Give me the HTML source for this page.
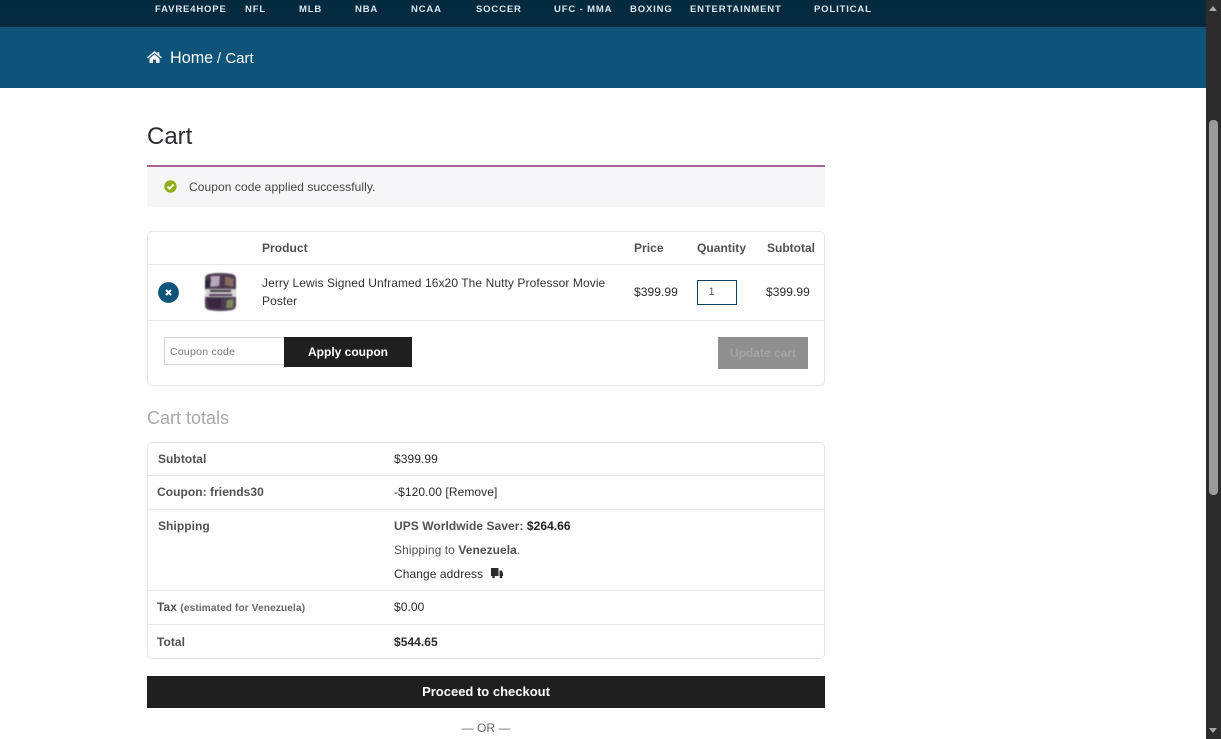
<!DOCTYPE html>
<html><head><meta charset="utf-8">
<style>
html,body{margin:0;padding:0;width:1221px;height:739px;overflow:hidden;background:#fff;font-family:"Liberation Sans",sans-serif;color:#515151}
.t{position:absolute;white-space:nowrap;font-size:12px;line-height:14px;letter-spacing:.08px}
.b{font-weight:bold;letter-spacing:.05px}
.l{position:absolute;background:#e8e8e8;height:1px}
.n{position:absolute;top:4px;white-space:nowrap;font-size:9.5px;line-height:12px;font-weight:bold;color:#dbe7ee;letter-spacing:.85px}
.d{color:#2b2b2b}
</style></head><body>
<div style="position:absolute;left:0;top:0;width:1206px;height:27px;background:linear-gradient(#052a40,#07293d)"></div>
<div style="position:absolute;left:0;top:27px;width:1206px;height:61px;background:#0e5379"></div>
<span class="n" style="left:155px">FAVRE4HOPE</span>
<span class="n" style="left:245px">NFL</span>
<span class="n" style="left:299px">MLB</span>
<span class="n" style="left:355px">NBA</span>
<span class="n" style="left:411px">NCAA</span>
<span class="n" style="left:476px">SOCCER</span>
<span class="n" style="left:554px">UFC - MMA</span>
<span class="n" style="left:630px">BOXING</span>
<span class="n" style="left:690px">ENTERTAINMENT</span>
<span class="n" style="left:814px">POLITICAL</span>

<svg style="position:absolute;left:147px;top:51px" width="15" height="12" viewBox="0 0 15 12"><path fill="#fff" d="M7.5 0 L10.5 2.6 V1 H12.3 V4.2 L15 6.5 L14 7.4 L7.5 2 L1 7.4 L0 6.5 Z M2.5 7.6 L7.5 3.4 L12.5 7.6 V12 H9 V8.6 H6 V12 H2.5 Z"/></svg>
<div class="t" style="left:170px;top:48px;font-size:16.2px;line-height:20px;color:#fff;letter-spacing:0">Home</div>
<div class="t" style="left:217px;top:50px;font-size:15px;line-height:18px;color:#fff;letter-spacing:0">/ Cart</div>

<div class="t" style="left:147px;top:122px;font-size:24px;line-height:30px;color:#2b2b33;letter-spacing:0">Cart</div>

<div style="position:absolute;left:147px;top:165px;width:678px;height:42px;background:#f6f6f8"></div>
<div style="position:absolute;left:147px;top:165px;width:678px;height:2px;background:#a46497"></div>
<svg style="position:absolute;left:164px;top:180px" width="13" height="13" viewBox="0 0 13 13"><circle cx="6.5" cy="6.5" r="6.2" fill="#8fae1b"/><path d="M3.5 6.7 L5.6 8.8 L9.6 4.5" fill="none" stroke="#fff" stroke-width="1.8"/></svg>
<div class="t" style="left:189px;top:180px;color:#444">Coupon code applied successfully.</div>

<div style="position:absolute;left:147px;top:231px;width:676px;height:153px;border:1px solid #e6e6e6;border-radius:5px"></div>
<div class="l" style="left:148px;top:264px;width:676px"></div>
<div class="l" style="left:148px;top:320px;width:676px"></div>
<div class="t b" style="left:262px;top:241px">Product</div>
<div class="t b" style="left:634px;top:241px">Price</div>
<div class="t b" style="left:697px;top:241px">Quantity</div>
<div class="t b" style="left:767px;top:241px;letter-spacing:0">Subtotal</div>

<svg style="position:absolute;left:158px;top:282px" width="21" height="21" viewBox="0 0 21 21"><circle cx="10.5" cy="10.5" r="10.4" fill="#0e5379"/><path d="M8 8 L13 13 M13 8 L8 13" stroke="#fff" stroke-width="2"/></svg>
<svg style="position:absolute;left:205px;top:273px;filter:blur(.7px)" width="31" height="38" viewBox="0 0 31 38"><path d="M4 1 Q15 -1 27 1 Q31 2 31 6 V32 Q31 36 27 37 Q15 39 4 37 Q0 36 0 32 V6 Q0 2 4 1 Z" fill="#4b3a52"/><path d="M6 3 L15 3 L14 13 L4 14 Z" fill="#b9a8bc"/><path d="M20 3 L29 6 L28 14 L20 12 Z" fill="#8a6b62"/><path d="M0 8 L6 6 L5 14 L0 15 Z" fill="#2e2233"/><rect x="0" y="16" width="31" height="8" fill="#d9d5d6"/><rect x="5" y="17" width="21" height="2" fill="#333"/><rect x="4" y="21" width="23" height="2" fill="#4a3550"/><path d="M2 25 H16 V35 H4 Z" fill="#3a2540"/><path d="M22 27 L29 26 L28 35 L21 35 Z" fill="#7d8a5a"/></svg>
<div class="t d" style="left:262px;top:276px;color:#333">Jerry Lewis Signed Unframed 16x20 The Nutty Professor Movie</div>
<div class="t d" style="left:262px;top:294px;color:#333">Poster</div>
<div class="t d" style="left:634px;top:285px">$399.99</div>
<div style="position:absolute;left:697px;top:280px;width:38px;height:23px;border:1px solid #0e3f5c;background:#fff"></div>
<div class="t" style="left:708.5px;top:285px;font-size:11px;color:#555">1</div>
<div class="t d" style="left:766px;top:285px">$399.99</div>

<div style="position:absolute;left:164px;top:337px;width:119px;height:26px;border:1px solid #d4d4d4;border-right:0;background:#fff"></div>
<div class="t" style="left:170px;top:345px;font-size:10.5px;color:#757575;letter-spacing:.25px">Coupon code</div>
<div style="position:absolute;left:284px;top:337px;width:128px;height:30px;background:#1f1f1f"></div>
<div class="t b" style="left:284px;top:345px;width:128px;text-align:center;color:#fff;font-size:12px;letter-spacing:0">Apply coupon</div>
<div style="position:absolute;left:718px;top:337px;width:90px;height:32px;background:#8f8f8f"></div>
<div class="t b" style="left:718px;top:346px;width:90px;text-align:center;color:#a5a5a5;letter-spacing:0">Update cart</div>

<div class="t" style="left:147px;top:407px;font-size:18px;line-height:22px;color:#a9a9a9;letter-spacing:0">Cart totals</div>

<div style="position:absolute;left:147px;top:442px;width:676px;height:215px;border:1px solid #e6e6e6;border-radius:5px"></div>
<div class="l" style="left:148px;top:475px;width:676px"></div>
<div class="l" style="left:148px;top:509px;width:676px"></div>
<div class="l" style="left:148px;top:590px;width:676px"></div>
<div class="l" style="left:148px;top:624px;width:676px"></div>
<div class="t b" style="left:158px;top:452px">Subtotal</div>
<div class="t d" style="left:394px;top:452px">$399.99</div>
<div class="t b" style="left:157px;top:485px">Coupon: friends30</div>
<div class="t d" style="left:394px;top:485px">-$120.00 [Remove]</div>
<div class="t b" style="left:158px;top:519px">Shipping</div>
<div class="t" style="left:394px;top:519px"><span class="b">UPS Worldwide Saver:</span> <span class="b" style="color:#222">$264.66</span></div>
<div class="t" style="left:394px;top:543px">Shipping to <span class="b">Venezuela</span>.</div>
<div class="t d" style="left:394px;top:567px">Change address</div>
<svg style="position:absolute;left:491px;top:567px" width="12" height="12" viewBox="0 0 12 12"><path fill="#2b2b2b" d="M0 1 H7.5 V9 H0 Z M8.5 3.5 H10.5 L12 6 V9 H8.5 Z"/><circle cx="2.5" cy="10" r="1.3" fill="#2b2b2b"/><circle cx="10" cy="10" r="1.3" fill="#2b2b2b"/></svg>
<div class="t" style="left:157px;top:600px"><span class="b">Tax</span> <span class="b" style="font-size:10px;color:#666;letter-spacing:.17px">(estimated for Venezuela)</span></div>
<div class="t d" style="left:394px;top:600px">$0.00</div>
<div class="t b" style="left:157px;top:635px">Total</div>
<div class="t b d" style="left:394px;top:635px">$544.65</div>

<div style="position:absolute;left:147px;top:676px;width:678px;height:32px;background:#1f1f1f"></div>
<div class="t b" style="left:147px;top:685px;width:678px;text-align:center;color:#fff;font-size:13px;letter-spacing:0">Proceed to checkout</div>
<div class="t" style="left:147px;top:721px;width:678px;text-align:center;color:#666;letter-spacing:0">— OR —</div>

<div style="position:absolute;left:1206px;top:0;width:15px;height:739px;background:#2c2c2c"></div>
<div style="position:absolute;left:1209px;top:120px;width:9px;height:375px;background:#9b9b9b;border-radius:4px"></div>
<div style="position:absolute;left:1209px;top:6px;width:0;height:0;border-left:4.5px solid transparent;border-right:4.5px solid transparent;border-bottom:5px solid #a8a8a8"></div>
<div style="position:absolute;left:1209px;top:728px;width:0;height:0;border-left:4.5px solid transparent;border-right:4.5px solid transparent;border-top:5px solid #a8a8a8"></div>
</body></html>
